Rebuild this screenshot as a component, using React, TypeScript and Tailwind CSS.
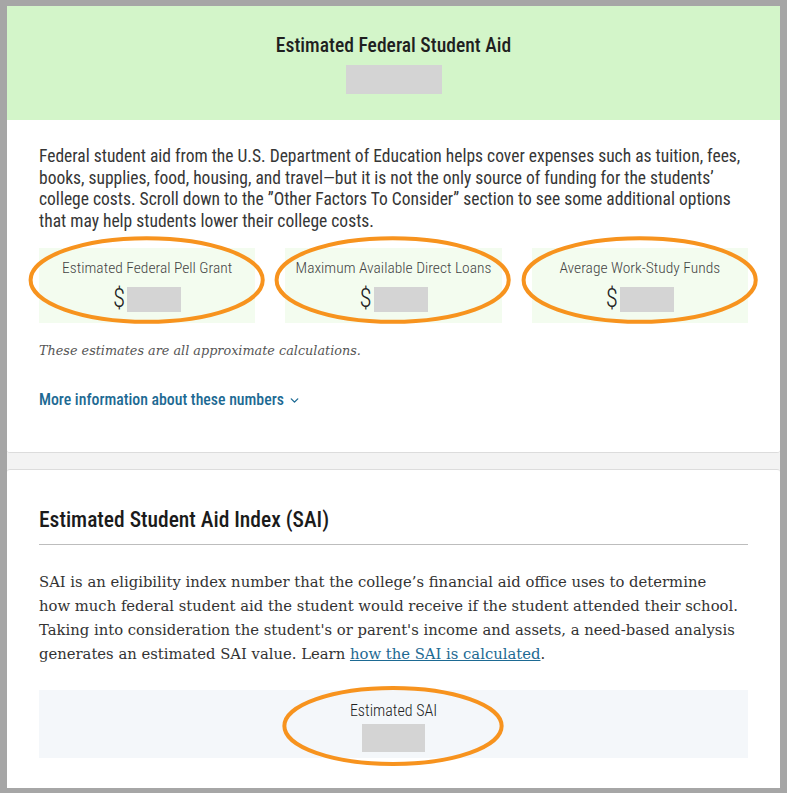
import React from "react";
import { ChevronDown } from "lucide-react";

const narrow = { fontFamily: '"Roboto Condensed", "Roboto", "Liberation Sans", sans-serif' };
const serif = { fontFamily: '"DejaVu Serif", "Liberation Serif", serif' };

function Ring({ className }: { className: string }) {
  return (
    <svg
      className={`pointer-events-none absolute ${className}`}
      viewBox="0 0 100 100"
      preserveAspectRatio="none"
    >
      <ellipse
        cx="50"
        cy="50"
        rx="48.5"
        ry="47.5"
        fill="none"
        stroke="#f7931e"
        strokeWidth="4"
        vectorEffect="non-scaling-stroke"
      />
    </svg>
  );
}

function AidBox({ label }: { label: string }) {
  return (
    <div className="relative h-[75px] bg-[#f3fcef] pt-[11px]" style={narrow}>
      <div className="text-center text-[15.5px] font-light leading-[18px] text-[#444]">{label}</div>
      <div className="mt-[9px] flex items-center justify-center">
        <span className="text-[25px] font-light leading-[26px] text-[#222]">$</span>
        <span className="ml-[2px] h-[25px] w-[54px] bg-[#d4d4d4]" />
      </div>
      <Ring className="left-[-12px] top-[-12px] h-[88px] w-[calc(100%+23px)]" />
    </div>
  );
}

export default function App() {
  return (
    <div className="min-h-[793px] bg-[#a6a6a6] px-[7px] pt-[6px] pb-[7px]">
      <div className="bg-[#f3f3f3]">
        {/* Federal aid summary card */}
        <section className="overflow-hidden rounded-b-[3px] border-b border-[#dcdcdc] bg-white">
          <div className="flex h-[114px] flex-col items-center bg-[#d3f5c9] pt-[27px]">
            <h2 className="text-[19.6px] font-medium leading-[26px] text-[#1f1f1f]" style={narrow}>
              Estimated Federal Student Aid
            </h2>
            <div className="mt-[6px] h-[29px] w-[96px] bg-[#d4d4d4]" />
          </div>

          <div className="px-8 pt-[26px] pb-[42px]">
            <p className="text-[17.5px] leading-[21.5px] text-[#363636]" style={narrow}>
              Federal student aid from the U.S. Department of Education helps cover expenses such as tuition, fees,
              <br />
              books, supplies, food, housing, and travel—but it is not the only source of funding for the students’
              <br />
              college costs. Scroll down to the ”Other Factors To Consider” section to see some additional options
              <br />
              that may help students lower their college costs.
            </p>

            <div className="mt-[16px] grid w-[709px] grid-cols-3 gap-[30px]">
              <AidBox label="Estimated Federal Pell Grant" />
              <AidBox label="Maximum Available Direct Loans" />
              <AidBox label="Average Work-Study Funds" />
            </div>

            <p className="mt-[18px] text-[12.8px] italic leading-[20px] text-[#555]" style={serif}>
              These estimates are all approximate calculations.
            </p>

            <button
              className="mt-[29px] flex items-center gap-[4px] text-[15.8px] font-medium leading-[20px] text-[#1d6a93]"
              style={narrow}
            >
              More information about these numbers
              <ChevronDown size={13} strokeWidth={2.5} />
            </button>
          </div>
        </section>

        <div className="h-[16px]" />

        {/* Student Aid Index card */}
        <section className="rounded-t-[3px] border-t border-[#dcdcdc] bg-white px-8 pt-[36px] pb-[30px]">
          <h2
            className="border-b border-[#bdbdbd] pb-[10px] text-[21.5px] font-medium leading-[28px] text-[#1b1b1b]"
            style={narrow}
          >
            Estimated Student Aid Index (SAI)
          </h2>

          <p className="mt-[25px] text-[14.8px] leading-[24px] text-[#333]" style={serif}>
            SAI is an eligibility index number that the college’s financial aid office uses to determine
            <br />
            how much federal student aid the student would receive if the student attended their school.
            <br />
            Taking into consideration the student's or parent's income and assets, a need-based analysis
            <br />
            generates an estimated SAI value. Learn{" "}
            <a href="#" className="text-[#1d6a93] underline">
              how the SAI is calculated
            </a>
            .
          </p>

          <div className="mt-[24px] flex h-[68px] w-[709px] justify-center bg-[#f4f7fa] pt-[12px]">
            <div className="relative flex flex-col items-center" style={narrow}>
              <div className="text-[16px] font-light leading-[18px] text-[#222]">Estimated SAI</div>
              <div className="mt-[4px] h-[28px] w-[63px] bg-[#d4d4d4]" />
              <Ring className="left-1/2 top-[-16px] h-[80px] w-[224px] -translate-x-1/2" />
            </div>
          </div>
        </section>
      </div>
    </div>
  );
}
